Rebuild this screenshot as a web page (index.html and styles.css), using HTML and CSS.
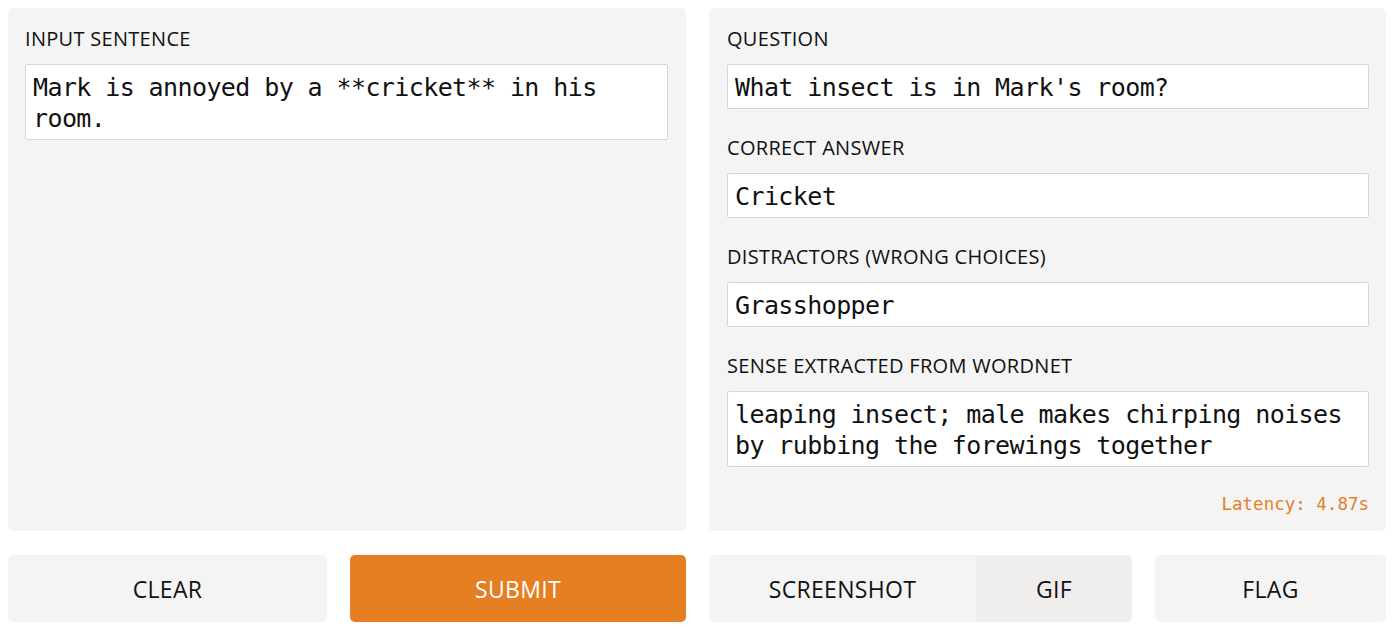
FILE: index.html
```html
<!DOCTYPE html>
<html>
<head>
<meta charset="utf-8">
<link rel="stylesheet" href="styles.css">
</head>
<body>
<div class="app">
  <div class="panels">
    <section class="panel">
      <div class="field">
        <div class="label">INPUT SENTENCE</div>
        <div class="box">Mark is annoyed by a **cricket** in his room.</div>
      </div>
    </section>
    <section class="panel">
      <div class="field">
        <div class="label">QUESTION</div>
        <div class="box">What insect is in Mark's room?</div>
      </div>
      <div class="field">
        <div class="label">CORRECT ANSWER</div>
        <div class="box">Cricket</div>
      </div>
      <div class="field">
        <div class="label">DISTRACTORS (WRONG CHOICES)</div>
        <div class="box">Grasshopper</div>
      </div>
      <div class="field">
        <div class="label">SENSE EXTRACTED FROM WORDNET</div>
        <div class="box">leaping insect; male makes chirping noises by rubbing the forewings together</div>
      </div>
      <div class="latency">Latency: 4.87s</div>
    </section>
  </div>
  <div class="buttons">
    <div class="btn-group left">
      <button class="btn clear">CLEAR</button>
      <button class="btn submit">SUBMIT</button>
    </div>
    <div class="btn-group right">
      <div class="split">
        <button class="btn shot">SCREENSHOT</button>
        <button class="btn gif">GIF</button>
      </div>
      <button class="btn flag">FLAG</button>
    </div>
  </div>
</div>
</body>
</html>
```

FILE: styles.css
```css
* { box-sizing: border-box; }
html, body { margin: 0; padding: 0; background: #fff; }
body { padding: 8px; font-family: "Open Sans", sans-serif; color: #111; }
.app { display: flex; flex-direction: column; gap: 24px; width: 1378px; }
.panels { display: grid; grid-template-columns: 678px 677px; gap: 23px; }
.panel {
  background: #f4f4f4;
  border-radius: 5px;
  padding: 18px 17px 18px 18px;
  min-height: 523px;
  display: flex;
  flex-direction: column;
}
.panel:first-child { padding-left: 17px; padding-right: 18px; }
.field { display: flex; flex-direction: column; }
.field + .field { margin-top: 26px; }
.label {
  font-size: 20px;
  line-height: 26px;
  letter-spacing: 0.3px;
  margin-bottom: 12px;
  color: #111;
}
.box {
  background: #fff;
  border: 1px solid #d6d6d6;
  border-radius: 2px;
  font-family: "DejaVu Sans Mono", monospace;
  font-size: 25px;
  letter-spacing: -0.6px;
  line-height: 31px;
  padding: 7px 7px 5px 7px;
  color: #111;
}
.latency {
  margin-top: auto;
  align-self: flex-end;
  font-family: "DejaVu Sans Mono", monospace;
  font-size: 17.5px;
  color: #e67e22;
  margin-bottom: -1px;
}
.buttons { display: grid; grid-template-columns: 678px 677px; gap: 23px; }
.btn-group { display: flex; gap: 23px; }
.btn {
  border: none;
  font-family: "Open Sans", sans-serif;
  font-size: 23px;
  letter-spacing: 0.3px;
  height: 67px;
  border-radius: 5px;
  background: #f4f4f4;
  color: #111;
  padding: 0;
}
.clear { width: 319px; }
.submit { flex: 1; background: #e67e22; color: #fff; }
.split { display: flex; width: 423px; border-radius: 5px; overflow: hidden; }
.split .btn { border-radius: 0; }
.shot { width: 267px; }
.gif { flex: 1; background: #efeeed; }
.flag { flex: 1; }
```
